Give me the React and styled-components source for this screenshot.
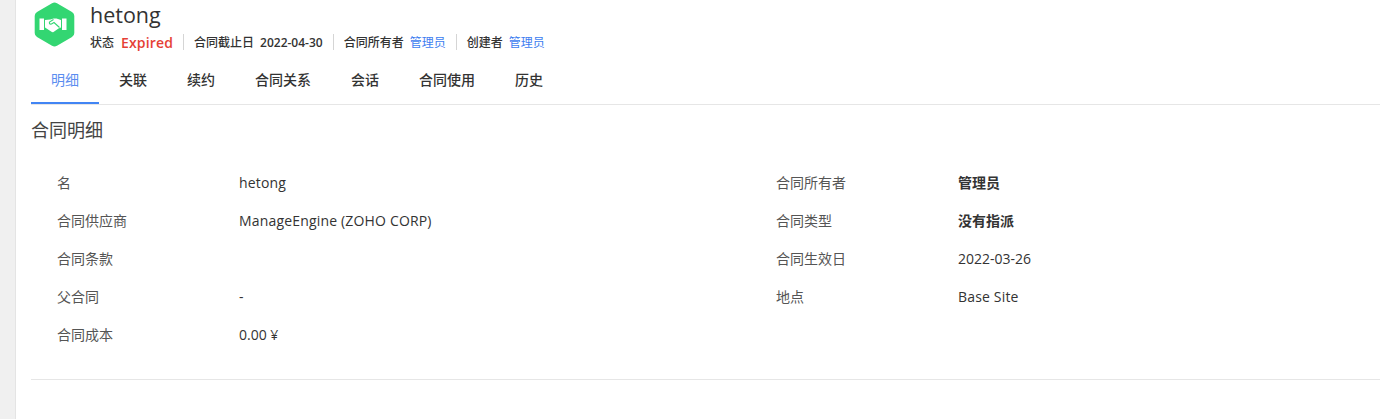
import React from "react";
import styled, { createGlobalStyle } from "styled-components";

const FONT = `"Open Sans", "Noto Sans CJK SC", sans-serif`;

const tabs = ["明细", "关联", "续约", "合同关系", "会话", "合同使用", "历史"];

const leftRows = [
  { label: "名", value: "hetong", text: true },
  { label: "合同供应商", value: "ManageEngine (ZOHO CORP)", text: true },
  { label: "合同条款", value: "" },
  { label: "父合同", value: "-" },
  { label: "合同成本", value: "0.00 ¥" },
];

const rightRows = [
  { label: "合同所有者", value: "管理员", bold: true },
  { label: "合同类型", value: "没有指派", bold: true },
  { label: "合同生效日", value: "2022-03-26" },
  { label: "地点", value: "Base Site", text: true },
];

function App() {
  return (
    <Page>
      <GlobalStyle />
      <SideStrip />
      <Main>
        <Header>
          <Logo>
            <svg width="45" height="47" viewBox="0 0 45 47">
              <path
                d="M20 2.2 a5 5 0 0 1 5 0 L40 11 a4.500 4.500 0 0 1 2.300 4 V32 a4.500 4.500 0 0 1 -2.300 4 L25 44.800 a5 5 0 0 1 -5 0 L5 36 a4.500 4.500 0 0 1 -2.300 -4 V15 a4.500 4.500 0 0 1 2.300 -4 Z"
                fill="#33d672"
              />
              <g transform="translate(7.500 16)">
                <rect x="0" y="1.500" width="4.500" height="11.500" fill="#fff" />
                <rect x="22.500" y="1.500" width="4.500" height="11.500" fill="#fff" />
                <path
                  d="M5.500 3 L11 2.500 L14 1.500 L17 1.500 L21.500 3 V10.500 L19 11.500 L14 15 Q13 15.500 12 14.800 L5.500 10.500 Z"
                  fill="#fff"
                />
                <path
                  d="M14 2.500 L10 5 Q9.300 7.500 12 7 L14.500 5.500 L20 10.500"
                  fill="none"
                  stroke="#33d672"
                  strokeWidth="1.100"
                />
              </g>
            </svg>
          </Logo>
          <HeaderText>
            <Title>hetong</Title>
            <MetaRow>
              <MetaItem>
                <MetaLabel>状态</MetaLabel>
                <Expired>Expired</Expired>
              </MetaItem>
              <MetaItem>
                <MetaLabel>合同截止日</MetaLabel>
                <MetaDate>2022-04-30</MetaDate>
              </MetaItem>
              <MetaItem>
                <MetaLabel>合同所有者</MetaLabel>
                <MetaLink>管理员</MetaLink>
              </MetaItem>
              <MetaItem>
                <MetaLabel>创建者</MetaLabel>
                <MetaLink>管理员</MetaLink>
              </MetaItem>
            </MetaRow>
          </HeaderText>
        </Header>
        <TabBar>
          {tabs.map((t, i) => (
            <Tab key={t} $active={i === 0}>
              {t}
            </Tab>
          ))}
        </TabBar>
        <SectionTitle>合同明细</SectionTitle>
        <Details>
          <Column>
            {leftRows.map((r) => (
              <Row key={r.label}>
                <Label>{r.label}</Label>
                <Value $text={r.text}>{r.value}</Value>
              </Row>
            ))}
          </Column>
          <Column>
            {rightRows.map((r) => (
              <Row key={r.label}>
                <Label>{r.label}</Label>
                <Value $bold={r.bold} $text={r.text}>
                  {r.value}
                </Value>
              </Row>
            ))}
          </Column>
        </Details>
        <Divider />
      </Main>
    </Page>
  );
}

export default App;

const GlobalStyle = createGlobalStyle`
  html, body {
    margin: 0;
    padding: 0;
    background: #fff;
    overflow: hidden;
  }
`;
const Page = styled.div`
  display: flex;
  height: 419px;
  font-family: ${FONT};
  color: #333;
  background: #fff;
`;
const SideStrip = styled.div`
  width: 15px;
  flex-shrink: 0;
  background: #f0f0f0;
  border-right: 1px solid #e4e4e4;
`;
const Main = styled.div`
  flex: 1;
  min-width: 0;
  padding-left: 15px;
`;
const Header = styled.div`
  display: flex;
  height: 60px;
`;
const Logo = styled.div`
  width: 45px;
  height: 47px;
  margin: 1px 0 0 1px;
  svg {
    display: block;
  }
`;
const HeaderText = styled.div`
  margin-left: 13px;
`;
const Title = styled.div`
  font-size: 21.5px;
  line-height: 30px;
  color: #333;
`;
const MetaRow = styled.div`
  display: flex;
  align-items: center;
  margin-top: 4px;
`;
const MetaItem = styled.div`
  display: flex;
  align-items: center;
  height: 16px;
  padding: 0 10px;
  border-left: 1px solid #d5d5d5;
  &:first-child {
    padding-left: 0;
    border-left: none;
  }
`;
const MetaLabel = styled.span`
  font-size: 12px;
  font-weight: 500;
  color: #333;
`;
const Expired = styled.span`
  margin-left: 7px;
  font-size: 14px;
  font-weight: 600;
  letter-spacing: 0.15px;
  color: #e53f36;
`;
const MetaDate = styled.span`
  margin-left: 6px;
  font-size: 12px;
  font-weight: 600;
  color: #333;
`;
const MetaLink = styled.span`
  margin-left: 6px;
  font-size: 12px;
  color: #3d7df0;
`;
const TabBar = styled.div`
  display: flex;
  height: 44px;
  border-bottom: 1px solid #e6e6e6;
`;
const Tab = styled.div`
  height: 44px;
  padding: 0 20px;
  box-sizing: border-box;
  font-size: 14px;
  font-weight: ${(props) => (props.$active ? 400 : 500)};
  line-height: 40px;
  color: ${(props) => (props.$active ? "#5a8df0" : "#333")};
  border-bottom: 2px solid ${(props) => (props.$active ? "#4285f4" : "transparent")};
`;
const SectionTitle = styled.div`
  margin-top: 12px;
  font-size: 18px;
  line-height: 26px;
  color: #444;
`;
const Details = styled.div`
  display: grid;
  grid-template-columns: 719px 1fr;
  height: 216px;
  margin-top: 20px;
  padding-left: 26px;
`;
const Column = styled.div`
  display: flex;
  flex-direction: column;
`;
const Row = styled.div`
  display: flex;
  align-items: center;
  height: 38px;
`;
const Label = styled.div`
  width: 182px;
  font-size: 14px;
  color: #555;
`;
const Value = styled.div`
  font-size: 14px;
  font-weight: ${(props) => (props.$bold ? 600 : 400)};
  letter-spacing: ${(props) => (props.$text ? "0.17px" : "0")};
  color: #333;
`;
const Divider = styled.div`
  height: 1px;
  background: #e6e6e6;
`;
